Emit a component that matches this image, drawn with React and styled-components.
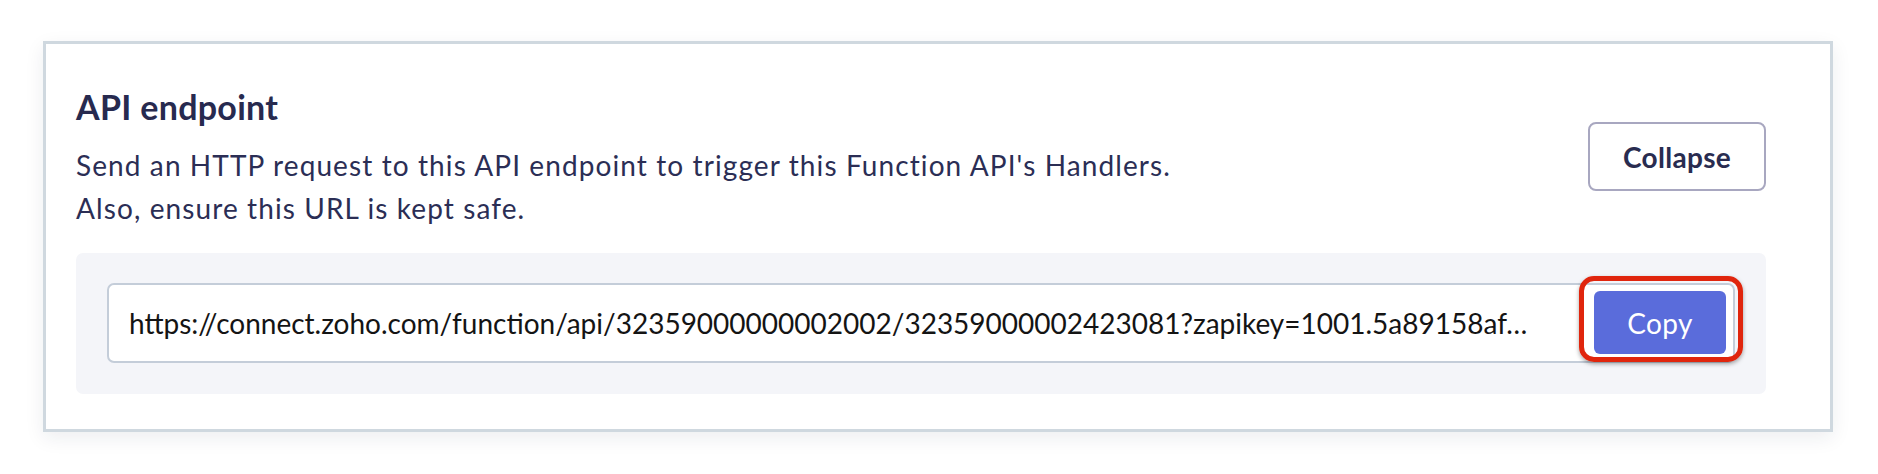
import React from "react";
import styled, { createGlobalStyle } from "styled-components";

const GlobalStyle = createGlobalStyle`
  html, body { margin: 0; padding: 0; background: #ffffff; }
  body { font-family: Lato, "Noto Sans", sans-serif; }
  * { box-sizing: border-box; }
`;

const Page = styled.div`
  padding: 41px 45px 40px 43px;
`;

const Card = styled.section`
  border: 3px solid #cfd8df;
  background: #ffffff;
  box-shadow: 0 6px 18px rgba(30, 40, 60, 0.08);
  padding: 43px 64px 35px 30px;
`;

const Header = styled.div`
  display: flex;
  align-items: center;
  justify-content: space-between;
  margin-bottom: 23px;
`;

const Intro = styled.div`
  display: flex;
  flex-direction: column;
`;

const Title = styled.h2`
  margin: 0 0 16px;
  font-family: Lato, sans-serif;
  font-weight: 700;
  font-size: 34px;
  letter-spacing: 0.3px;
  line-height: 1.2;
  color: #272a4f;
`;

const Description = styled.p`
  margin: 0;
  font-family: Lato, sans-serif;
  font-weight: 400;
  font-size: 28px;
  letter-spacing: 1.1px;
  line-height: 43px;
  color: #2b2e55;
`;

const OutlineButton = styled.button`
  width: 178px;
  height: 69px;
  margin-bottom: 3px;
  border: 2px solid #a8a7c0;
  border-radius: 8px;
  background: #ffffff;
  font-family: Lato, sans-serif;
  font-weight: 700;
  font-size: 28px;
  letter-spacing: 0.3px;
  color: #292c50;
  padding: 0;
  cursor: pointer;
`;

const Panel = styled.div`
  background: #f4f5f9;
  border-radius: 7px;
  padding: 30px 31px 31px 31px;
`;

const UrlField = styled.div`
  display: flex;
  align-items: center;
  height: 80px;
  border: 2px solid #c4cdd9;
  border-radius: 7px;
  background: #ffffff;
  padding: 0 7px 0 20px;
`;

const UrlText = styled.div`
  flex: 1;
  min-width: 0;
  white-space: nowrap;
  overflow: hidden;
  text-overflow: ellipsis;
  font-family: Lato, sans-serif;
  font-size: 28px;
  color: #141414;
`;

const Highlight = styled.div`
  position: relative;
  display: flex;
`;

const Ring = styled.span`
  position: absolute;
  top: -15px;
  left: -15px;
  right: -17px;
  bottom: -8px;
  border: 5px solid #e0250d;
  border-radius: 15px;
  box-shadow: 0 2px 4px rgba(0, 0, 0, 0.35);
  pointer-events: none;
`;

const PrimaryButton = styled.button`
  width: 132px;
  height: 63px;
  border: none;
  border-radius: 6px;
  background: #5a6cdb;
  color: #ffffff;
  font-family: Lato, sans-serif;
  font-weight: 400;
  font-size: 28px;
  letter-spacing: 0.3px;
  padding: 0;
  cursor: pointer;
`;

export default function App() {
  return (
    <>
      <GlobalStyle />
      <Page>
        <Card>
          <Header>
            <Intro>
              <Title>API endpoint</Title>
              <Description>
                Send an HTTP request to this API endpoint to trigger this Function API's Handlers.
                <br />
                Also, ensure this URL is kept safe.
              </Description>
            </Intro>
            <OutlineButton>Collapse</OutlineButton>
          </Header>
          <Panel>
            <UrlField>
              <UrlText>
                https://connect.zoho.com/function/api/32359000000002002/32359000002423081?zapikey=1001.5a89158af…
              </UrlText>
              <Highlight>
                <PrimaryButton>Copy</PrimaryButton>
                <Ring />
              </Highlight>
            </UrlField>
          </Panel>
        </Card>
      </Page>
    </>
  );
}
